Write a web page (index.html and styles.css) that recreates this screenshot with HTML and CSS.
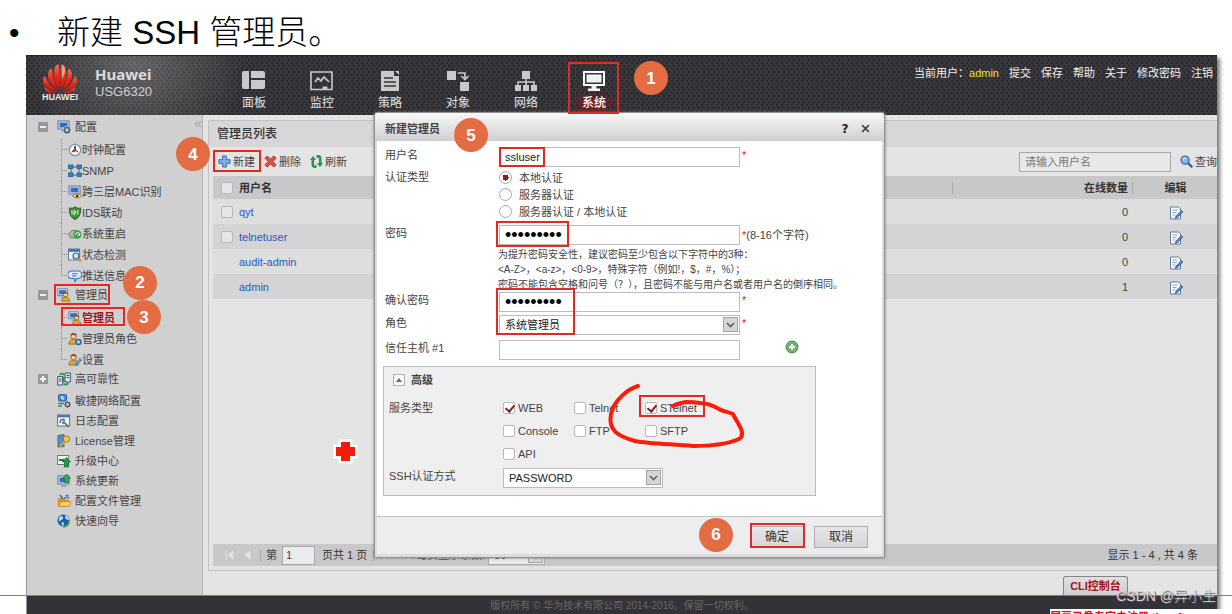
FILE: index.html
```html
<!DOCTYPE html>
<html lang="zh-CN">
<head>
<meta charset="utf-8">
<title>新建 SSH 管理员</title>
<link rel="stylesheet" href="styles.css">
</head>
<body>
<svg class="defs" aria-hidden="true">
  <defs>
    <linearGradient id="petal" x1="0" y1="0" x2="0" y2="1"><stop offset="0" stop-color="#f0705a"/><stop offset=".5" stop-color="#e8281c"/><stop offset="1" stop-color="#c81410"/></linearGradient>
    <symbol id="monitor" viewBox="0 0 14 14"><rect x="1" y="1" width="11" height="8" fill="#e8eef8" stroke="#5b6f92"/><rect x="2.500" y="2.500" width="8" height="5" fill="#2f6fc4"/><path d="M5 10h4l1 2H4z" fill="#9aa4b4"/></symbol>
    <symbol id="gear" viewBox="0 0 8 8"><circle cx="4" cy="4" r="2.400" fill="none" stroke="#4a5566" stroke-width="1.400"/><path d="M4 0v1.500M4 6.500V8M0 4h1.500M6.500 4H8M1.200 1.200l1 1M5.800 5.800l1 1M6.800 1.200l-1 1M1.200 6.800l1-1" stroke="#4a5566"/></symbol>
    <symbol id="person" viewBox="0 0 14 14"><path d="M1 13c0-4 2-5 5-5s5 1 5 5z" fill="#e9a928" stroke="#8a5a12" stroke-width=".8"/><circle cx="6" cy="4.500" r="3" fill="#f3cf9a" stroke="#7c4a1c" stroke-width=".8"/><path d="M2.800 4C3 .6 9 .6 9.200 4 7 3.500 5 2.500 2.800 4z" fill="#7c4a1c"/></symbol>
    <symbol id="i-config" viewBox="0 0 14 14"><use href="#monitor" width="14" height="14"/><circle cx="10" cy="10" r="4" fill="#d0d0d1"/><use href="#gear" x="6" y="6" width="8" height="8"/></symbol>
    <symbol id="i-clock" viewBox="0 0 14 14"><circle cx="7" cy="7" r="5.700" fill="#f4f8fb" stroke="#7b94a8" stroke-width="1.300"/><path d="M7 3v4.500l-3 1" fill="none" stroke="#a52020" stroke-width="1.800"/><path d="M7 7l3 2" stroke="#333"/></symbol>
    <symbol id="i-snmp" viewBox="0 0 14 14"><path d="M3 3h8M3 4v7M11 4v7M3 11h8" stroke="#51616e" fill="none"/><g fill="#2a86c8" stroke="#14517f" stroke-width=".7"><rect x=".5" y="1" width="4.500" height="3.500"/><rect x="9" y="1" width="4.500" height="3.500"/><rect x=".5" y="9" width="4.500" height="3.500"/><rect x="9" y="9" width="4.500" height="3.500"/></g></symbol>
    <symbol id="i-mac" viewBox="0 0 14 14"><use href="#monitor" width="14" height="14"/><path d="M5 11c2-3 6-3 8.500 0-2.500 2.600-6 2.600-8.500 0z" fill="#fbeec0" stroke="#8c6a1e" stroke-width=".9"/><circle cx="9.200" cy="10.900" r="1.500" fill="#463312"/></symbol>
    <symbol id="i-ids" viewBox="0 0 14 14"><path d="M1.500 2c2 .6 4 .3 5.500-1 1.500 1.300 3.500 1.600 5.500 1 .5 5-1 9-5.500 11.500C2.500 11 1 7 1.500 2z" fill="#3c9a34" stroke="#4d5a4d" stroke-width="1.200"/><path d="M4 4.500v4M6 4.500v4l1.500-1v-2zM10.500 4.500l-1.500 1 1.500 2-1.500 1" stroke="#e6f6da" fill="none"/></symbol>
    <symbol id="i-reboot" viewBox="0 0 14 14"><path d="M.6 7l3-3.500h6l2 3-1 4.500h-8z" fill="#aeb6b2" stroke="#6c7672" stroke-width=".9"/><circle cx="9.500" cy="7.500" r="4" fill="#3aa545"/><path d="M7.800 8a1.800 1.800 0 1 1 3.200 0M11.700 6v2.300h-2" fill="none" stroke="#fff"/></symbol>
    <symbol id="i-state" viewBox="0 0 14 14"><rect x=".6" y="1" width="11" height="11" fill="#f5f8fc" stroke="#4a78ac"/><path d="M1 2.500h10.500" stroke="#2f6cb4" stroke-width="2.500"/><circle cx="8" cy="8" r="3" fill="#cfe4f7" stroke="#3f5d80" stroke-width="1.100"/><path d="M10 10.300l3 3" stroke="#cf9420" stroke-width="2.200"/></symbol>
    <symbol id="i-push" viewBox="0 0 14 14"><path d="M3.500 2h6.500a3.300 3.300 0 0 1 0 7.500H8.500l-1.500 3-.8-3H3.500a3.300 3.300 0 0 1 0-7.500z" fill="#dcebfa" stroke="#3b74b2" stroke-width="1.200"/><path d="M4 4.800h5.500M4 7h4.500" stroke="#3b74b2"/></symbol>
    <symbol id="i-admin" viewBox="0 0 14 14"><use href="#monitor" width="12" height="12"/><use href="#person" x="4" y="3" width="11" height="11"/></symbol>
    <symbol id="i-role" viewBox="0 0 14 14"><use href="#person" width="13" height="13"/><circle cx="10.500" cy="10" r="2.500" fill="#b6d4f0" stroke="#38659c" stroke-width="1.500"/></symbol>
    <symbol id="i-set" viewBox="0 0 14 14"><use href="#person" width="13" height="13"/><path d="M13 6l-6 6" stroke="#3b74b2" stroke-width="3"/><path d="M12.500 6l-6 6" stroke="#a8caec"/></symbol>
    <symbol id="i-ha" viewBox="0 0 14 14"><path d="M.7 4.500h5v8.500h-5zM8 1h5.300v9H8z" fill="#dfe9e0" stroke="#38507a"/><path d="M2 7h2.500M2 9h2.500M9.500 3.500h2.500M9.500 5.500h2.500" stroke="#38507a"/><path d="M3 3c1-2 3-2 4 0M11 11c-1 2-3 2-4.500.5M6.800 5v5" stroke="#169634" stroke-width="1.700" fill="none"/></symbol>
    <symbol id="i-agile" viewBox="0 0 14 14"><rect x="1.500" y=".6" width="8" height="6.500" rx="1" fill="#3f8fdc" stroke="#2b5f9a"/><path d="M5.500 1.800L4 4h3L5.500 6.200" stroke="#fff" fill="none"/><path d="M1 9.500h6M5 12H1" stroke="#2b9a41" stroke-width="1.700"/><use href="#gear" x="7" y="7" width="7" height="7"/></symbol>
    <symbol id="i-log" viewBox="0 0 14 14"><rect x=".6" y="1" width="12" height="11" fill="#eef1f4" stroke="#59718c"/><path d="M1 2.200h11.500" stroke="#4b76a5" stroke-width="2.200"/><path d="M3 9c0-3 2-4 4-3.500v3.500H5M8 9l3.500 4" fill="none" stroke="#505f6f" stroke-width="1.400"/></symbol>
    <symbol id="i-license" viewBox="0 0 14 14"><path d="M1 1.500l6-.9v12L1 13z" fill="#568dc4" stroke="#39618a" stroke-width=".8"/><circle cx="9.500" cy="5" r="3.200" fill="#f4c652" stroke="#a36e16" stroke-width=".9"/><path d="M8 7l-5 5.500" stroke="#dd9d28" stroke-width="2.200"/></symbol>
    <symbol id="i-up" viewBox="0 0 14 14"><rect x=".6" y="1.500" width="11" height="9" fill="#f1f4f0" stroke="#6e7a72"/><path d="M2 6h5" stroke="#16803a" stroke-width="2"/><path d="M9.500 3.500L13.500 8H11.500v5h-4V8H5.500z" fill="#1f9b44" stroke="#0e6028" stroke-width=".7"/></symbol>
    <symbol id="i-update" viewBox="0 0 14 14"><use href="#monitor" y="1" width="14" height="14"/><path d="M9.500 0l4 4.500h-2v4h-4v-4h-2z" fill="#35aa56" stroke="#16703a" stroke-width=".7"/></symbol>
    <symbol id="i-file" viewBox="0 0 14 14"><path d="M.7 4h5l1.300 1.500h5V12H.7z" fill="#dd9422"/><path d="M2 12.500L3.500 7.500H14l-2 5z" fill="#fbcf61" stroke="#b87618" stroke-width=".7"/><path d="M3 1l3 4M9 1.200l3 3M11 1L7 5" stroke="#3c6fa8" stroke-width="1.600"/></symbol>
    <symbol id="i-wizard" viewBox="0 0 14 14"><circle cx="6.500" cy="6.500" r="6" fill="#1f5fb0"/><path d="M2 4c2-3 4-2 4 0S3 6 2 8zM8 1.500c2 0 4 2 4 4-2 1-4 0-4-4zM5 8c2 0 3 2 1 4-1-1-2-2-1-4z" fill="#b7e0f2"/><path d="M6 13c4 0 7-3 6-7" fill="none" stroke="#4aa838" stroke-width="1.600"/></symbol>
    <symbol id="i-edit" viewBox="0 0 14 14"><path d="M1.500 1h8l2 2v10h-10z" fill="#fbfcfe" stroke="#63799a"/><path d="M3.500 4h5M3.500 6.500h4M3.500 9h3" stroke="#86a0c4"/><path d="M12.500 4.500L7 10l-1 2.500 2.400-.8L14 6z" fill="#4b86c8" stroke="#2b5284" stroke-width=".6"/></symbol>
    <symbol id="i-chev" viewBox="0 0 15 15"><rect x=".5" y=".5" width="14" height="14" fill="#d5d5d8" stroke="#a3a3a8"/><path d="M4 6l3.500 3.500L11 6" fill="none" stroke="#5c5c62" stroke-width="1.600"/></symbol>
  </defs>
</svg>
<div class="slide">
  <h1 class="slide-title"><span class="bullet">•</span>新建 SSH 管理员。</h1>
  <div class="app">
    <header class="topbar">
      <div class="brand">
        <svg class="logo" viewBox="0 0 36 36" role="img" aria-label="HUAWEI">
          <g fill="url(#petal)">
            <path d="M17.400 25C12 17 11.500 12 12.500 3.500c.5-2.500 2.500-3.500 4.300-3.500.9 8 1.200 17 .6 25z"/>
            <path d="M18.600 25C24 17 24.500 12 23.500 3.500 23 1 21 0 19.200 0c-.9 8-1.200 17-.6 25z"/>
            <path d="M16.500 25.500C8 20 5.500 15 6 9.500 6.200 6.500 8 4.500 10 4c.3 8 3 15.500 6.500 21.500z"/>
            <path d="M19.500 25.500C28 20 30.500 15 30 9.500 29.800 6.500 28 4.500 26 4c-.3 8-3 15.500-6.500 21.500z"/>
            <path d="M15.500 26.500C6 25 1.500 21.500 1 17c-.2-2.500.6-4 1.800-5.500C5.500 18 10 23 15.500 26.500z"/>
            <path d="M20.500 26.500C30 25 34.500 21.500 35 17c.2-2.500-.6-4-1.800-5.500C30.500 18 26 23 20.500 26.500z"/>
            <path d="M15 27.500c-5 1.700-9 1.500-11-1C3 25.200 2.500 24 2.500 22.500 6.500 25.500 10.500 27 15 27.500z"/>
            <path d="M21 27.500c5 1.700 9 1.500 11-1 1-1.300 1.500-2.500 1.500-4C29.500 25.500 25.500 27 21 27.500z"/>
          </g>
          <path d="M20 1c2 .3 3 2 3 5-.4 4-2 7-3 9z" fill="#f8b48c" opacity=".8"/>
          <text class="logo-text" x="18" y="35" text-anchor="middle">HUAWEI</text>
        </svg>
        <div class="brand-text"><strong class="brand-name">Huawei</strong><span class="brand-model">USG6320</span></div>
      </div>
      <nav class="nav">
        <a class="nav-item" href="#"><svg class="nav-icon" viewBox="0 0 24 22"><path d="M0 3a2 2 0 0 1 2-2h5v18H2a2 2 0 0 1-2-2zM9 1h12a2 2 0 0 1 2 2v5H9zM9 10h14v7a2 2 0 0 1-2 2H9z"/></svg>面板</a>
        <a class="nav-item" href="#"><svg class="nav-icon" viewBox="0 0 24 22"><path d="M1 2h21v17.500H1z" fill="none" stroke="#c9c9cb" stroke-width="1.600"/><path d="M5 12l3-4 3 3 3-4 5 5" fill="none" stroke="#c9c9cb" stroke-width="1.700"/><path d="M12.500 16.500h5v3h-5z"/></svg>监控</a>
        <a class="nav-item" href="#"><svg class="nav-icon" viewBox="0 0 24 22"><path d="M3 1h13v5h5v15H3zM17 1h4v4z"/><path d="M6 8h9M6 12h12M6 16h12" stroke="#333235" stroke-width="1.600"/></svg>策略</a>
        <a class="nav-item" href="#"><svg class="nav-icon" viewBox="0 0 24 22"><path d="M1 1h9v9H1zM14 12h9v9h-9z"/><path d="M12 3h7v5M15.500 6l3.500 3.500L22.500 6" fill="none" stroke="#c9c9cb" stroke-width="1.700"/></svg>对象</a>
        <a class="nav-item" href="#"><svg class="nav-icon" viewBox="0 0 24 22"><path d="M8 1h8v8H8zM1 15h6v6H1zM9 15h6v6H9zM17 15h6v6h-6z"/><path d="M12 9v6M4 15v-3h16v3" fill="none" stroke="#c9c9cb" stroke-width="1.500"/></svg>网络</a>
        <a class="nav-item active" href="#"><svg class="nav-icon" viewBox="0 0 24 22"><path d="M2 2h20v13H2z" fill="none" stroke="#fff" stroke-width="2"/><path d="M4.500 4.500h15v8h-15zM9.500 16h5v2.500H18V21H6v-2.500h3.500z" fill="#f2f2f2"/></svg>系统</a>
      </nav>
      <div class="account">
        <span>当前用户：<b class="account-name">admin</b></span>
        <a href="#">提交</a><a href="#">保存</a><a href="#">帮助</a><a href="#">关于</a><a href="#">修改密码</a><a href="#">注销</a>
      </div>
    </header>

    <div class="workspace">
      <aside class="sidebar">
        <span class="collapse">«</span>
        <ul class="tree">
          <li>
            <a class="node head" href="#"><i class="toggle minus"></i><svg class="icon"><use href="#i-config"/></svg>配置</a>
            <ul class="branch">
              <li><a class="node" href="#"><svg class="icon"><use href="#i-clock"/></svg>时钟配置</a></li>
              <li><a class="node" href="#"><svg class="icon"><use href="#i-snmp"/></svg>SNMP</a></li>
              <li><a class="node" href="#"><svg class="icon"><use href="#i-mac"/></svg>跨三层MAC识别</a></li>
              <li><a class="node" href="#"><svg class="icon"><use href="#i-ids"/></svg>IDS联动</a></li>
              <li><a class="node" href="#"><svg class="icon"><use href="#i-reboot"/></svg>系统重启</a></li>
              <li><a class="node" href="#"><svg class="icon"><use href="#i-state"/></svg>状态检测</a></li>
              <li><a class="node" href="#"><svg class="icon"><use href="#i-push"/></svg>推送信息</a></li>
            </ul>
          </li>
          <li>
            <a class="node head" href="#"><i class="toggle minus"></i><svg class="icon"><use href="#i-admin"/></svg>管理员</a>
            <ul class="branch">
              <li><a class="node current" href="#"><svg class="icon"><use href="#i-admin"/></svg>管理员</a></li>
              <li><a class="node" href="#"><svg class="icon"><use href="#i-role"/></svg>管理员角色</a></li>
              <li><a class="node" href="#"><svg class="icon"><use href="#i-set"/></svg>设置</a></li>
            </ul>
          </li>
          <li><a class="node head" href="#"><i class="toggle plus"></i><svg class="icon"><use href="#i-ha"/></svg>高可靠性</a></li>
        </ul>
        <ul class="tree leaves">
          <li><a class="node" href="#"><svg class="icon"><use href="#i-agile"/></svg>敏捷网络配置</a></li>
          <li><a class="node" href="#"><svg class="icon"><use href="#i-log"/></svg>日志配置</a></li>
          <li><a class="node" href="#"><svg class="icon"><use href="#i-license"/></svg>License管理</a></li>
          <li><a class="node" href="#"><svg class="icon"><use href="#i-up"/></svg>升级中心</a></li>
          <li><a class="node" href="#"><svg class="icon"><use href="#i-update"/></svg>系统更新</a></li>
          <li><a class="node" href="#"><svg class="icon"><use href="#i-file"/></svg>配置文件管理</a></li>
          <li><a class="node" href="#"><svg class="icon"><use href="#i-wizard"/></svg>快速向导</a></li>
        </ul>
      </aside>

      <main class="main">
        <section class="panel">
          <h2 class="panel-title">管理员列表</h2>
          <div class="panel-body">
            <div class="toolbar">
              <button class="tool" type="button"><svg class="tool-icon" viewBox="0 0 14 14"><path d="M5 1h4v4h4v4H9v4H5V9H1V5h4z" fill="#7fb0e6" stroke="#3566a4"/></svg>新建</button>
              <button class="tool" type="button"><svg class="tool-icon" viewBox="0 0 14 14"><path d="M1 3.500L3.500 1 7 4.500 10.500 1 13 3.500 9.500 7l3.500 3.500-2.500 2.500L7 9.500 3.500 13 1 10.500 4.500 7z" fill="#dd5048" stroke="#ac2924"/></svg>删除</button>
              <button class="tool" type="button"><svg class="tool-icon" viewBox="0 0 14 14"><path d="M7 12.500H4.500C3 12.500 3 11 3 9V5M7 1.500h2.500C11 1.500 11 3 11 5v4" fill="none" stroke="#2f9350" stroke-width="2.800"/><path d="M0 5.500L3.300 1 6.500 5.500zM7.500 8.500l3.200 4.500L14 8.500z" fill="#2f9350"/></svg>刷新</button>
              <div class="search">
                <input class="search-input" type="text" placeholder="请输入用户名" aria-label="请输入用户名">
                <button class="tool" type="button"><svg class="tool-icon" viewBox="0 0 14 14"><path d="M8.500 8.500l4 4" stroke="#46658c" stroke-width="2.600" stroke-linecap="round"/><circle cx="5.500" cy="5.500" r="4.300" fill="#86b6ea" stroke="#3f6cae" stroke-width="1.400"/><path d="M3 5c.5-1.500 2-2 3.500-1.500" stroke="#e6f2fd" fill="none"/></svg>查询</button>
              </div>
            </div>
            <table class="grid">
              <thead>
                <tr><th class="col-check"><input class="check" type="checkbox" aria-label="全选"></th><th class="col-name">用户名</th><th class="col-online">在线数量</th><th class="col-edit">编辑</th></tr>
              </thead>
              <tbody>
                <tr><td class="col-check"><input class="check" type="checkbox" aria-label="qyt"></td><td><a href="#">qyt</a></td><td class="col-online">0</td><td class="col-edit"><button class="edit" type="button" aria-label="编辑 qyt"><svg class="icon"><use href="#i-edit"/></svg></button></td></tr>
                <tr><td class="col-check"><input class="check" type="checkbox" aria-label="telnetuser"></td><td><a href="#">telnetuser</a></td><td class="col-online">0</td><td class="col-edit"><button class="edit" type="button" aria-label="编辑 telnetuser"><svg class="icon"><use href="#i-edit"/></svg></button></td></tr>
                <tr><td></td><td><a href="#">audit-admin</a></td><td class="col-online">0</td><td class="col-edit"><button class="edit" type="button" aria-label="编辑 audit-admin"><svg class="icon"><use href="#i-edit"/></svg></button></td></tr>
                <tr><td></td><td><a href="#">admin</a></td><td class="col-online">1</td><td class="col-edit"><button class="edit" type="button" aria-label="编辑 admin"><svg class="icon"><use href="#i-edit"/></svg></button></td></tr>
              </tbody>
            </table>
            <div class="pager">
              <svg class="pager-arrows" viewBox="0 0 28 10"><path d="M2 0v10M9 1L4 5l5 4zM26 1l-5 4 5 4z" fill="#e2e2e3" stroke="#e2e2e3"/></svg>
              <span class="divider"></span>
              <label class="pager-label" for="page">第</label>
              <input class="page-input" id="page" type="text" value="1">
              <span class="pager-total">页共 1 页</span>
              <span class="divider"></span>
              <svg class="pager-arrows" viewBox="0 0 28 10"><path d="M2 1l5 4-5 4zM18 1l5 4-5 4zM26 0v10" fill="#e2e2e3" stroke="#e2e2e3"/></svg>
              <label class="pager-size" for="size">每页显示条数:</label>
              <span class="select"><select class="size-select" id="size"><option>50</option></select><svg class="select-arrow"><use href="#i-chev"/></svg></span>
              <span class="pager-info">显示 1 - 4 , 共 4 条</span>
            </div>
          </div>
        </section>
        <div class="console-bar"><button class="console" type="button">CLI控制台</button></div>
      </main>
    </div>

    <footer class="footer">版权所有 © 华为技术有限公司 2014-2016。保留一切权利。</footer>

    <form class="dialog" role="dialog" aria-labelledby="dialog-title">
      <div class="dialog-head">
        <h2 class="dialog-title" id="dialog-title">新建管理员</h2>
        <button class="dialog-tool" type="button" aria-label="帮助">?</button>
        <button class="dialog-tool" type="button" aria-label="关闭"><svg class="close-icon" viewBox="0 0 8 8"><path d="M1 1l6 6M7 1L1 7" stroke="#444" stroke-width="1.400"/></svg></button>
      </div>
      <div class="dialog-body">
        <div class="row"><label class="label" for="user">用户名</label><input class="field" id="user" type="text" value="ssluser"><span class="req">*</span></div>
        <div class="row auth">
          <span class="label" id="auth-label">认证类型</span>
          <div class="radios" role="radiogroup" aria-labelledby="auth-label">
            <label class="radio-label"><input class="radio" type="radio" name="auth" checked>本地认证</label>
            <label class="radio-label"><input class="radio" type="radio" name="auth">服务器认证</label>
            <label class="radio-label"><input class="radio" type="radio" name="auth">服务器认证 / 本地认证</label>
          </div>
        </div>
        <div class="row password"><label class="label" for="pwd">密码</label><input class="field secret" id="pwd" type="password" value="abcdefghi"><span class="hint"><span class="req">*</span>(8-16个字符)</span></div>
        <p class="tips">为提升密码安全性，建议密码至少包含以下字符中的3种：<br>&lt;A-Z&gt;，&lt;a-z&gt;，&lt;0-9&gt;，特殊字符（例如!，$，#，%）；<br>密码不能包含空格和问号（？），且密码不能与用户名或者用户名的倒序相同。</p>
        <div class="row"><label class="label" for="pwd2">确认密码</label><input class="field secret" id="pwd2" type="password" value="abcdefghi"><span class="req">*</span></div>
        <div class="row role"><label class="label" for="role">角色</label><span class="select"><select class="field" id="role"><option>系统管理员</option></select><svg class="select-arrow"><use href="#i-chev"/></svg></span><span class="req">*</span></div>
        <div class="row host"><label class="label" for="host">信任主机 #1</label><input class="field" id="host" type="text"><button class="add" type="button" aria-label="添加"><svg class="add-icon" viewBox="0 0 14 14"><circle cx="7" cy="7" r="6" fill="#6fb468" stroke="#4c8d4a"/><path d="M7 4v6M4 7h6" stroke="#fff" stroke-width="2"/></svg></button></div>
        <section class="advanced">
          <h3 class="advanced-title"><button class="fold" type="button" aria-label="收起高级"></button>高级</h3>
          <div class="row service-row">
            <span class="label">服务类型</span>
            <div class="services">
              <label class="check-label"><input class="check" type="checkbox" checked>WEB</label>
              <label class="check-label"><input class="check" type="checkbox">Telnet</label>
              <label class="check-label"><input class="check" type="checkbox" checked>STelnet</label>
              <label class="check-label"><input class="check" type="checkbox">Console</label>
              <label class="check-label"><input class="check" type="checkbox">FTP</label>
              <label class="check-label"><input class="check" type="checkbox">SFTP</label>
              <label class="check-label"><input class="check" type="checkbox">API</label>
            </div>
          </div>
          <div class="row"><label class="label" for="ssh">SSH认证方式</label><span class="select"><select class="field short" id="ssh"><option>PASSWORD</option></select><svg class="select-arrow"><use href="#i-chev"/></svg></span></div>
        </section>
      </div>
      <div class="dialog-foot"><button class="btn" type="button">确定</button><button class="btn" type="button">取消</button></div>
    </form>
  </div>

  <div class="rule"></div>
  <svg class="notes" aria-hidden="true">
    <g class="frames">
      <rect x="569" y="63" width="49" height="50"/>
      <rect x="214" y="151" width="46" height="20"/>
      <rect x="55" y="285" width="54" height="19"/>
      <rect x="62" y="308" width="62" height="17"/>
      <rect x="500" y="148" width="44" height="18"/>
      <rect x="497" y="222" width="71" height="24"/>
      <rect x="497" y="289" width="77" height="45"/>
      <rect x="640" y="396" width="64" height="20"/>
      <rect x="751" y="524" width="53" height="23"/>
    </g>
    <path class="scribble" d="M638 386C628 389 614 400 611 414C608 430 617 436 635 441C650 444 672 444 693 446C712 446 730 443 739 439C744 436 742 430 739 425C737 421 734 417 733 414C728 412 722 411 719 409C712 405 707 403 700 403C694 402 690 402 686 402C681 403 676 404 673 406"/>
    <path d="M341 442h9v5h5v9h-5v5h-9v-5h-5v-9h5z" fill="#fa1808" stroke="#fff" stroke-width="5" paint-order="stroke"/>
    <g class="badges">
      <circle cx="651" cy="78" r="17"/><circle cx="140" cy="283" r="17"/><circle cx="144" cy="317" r="17"/><circle cx="193" cy="154" r="17"/><circle cx="471" cy="135" r="17"/><circle cx="716" cy="535" r="17"/>
    </g>
    <g class="numbers">
      <text x="651" y="84">1</text><text x="140" y="288">2</text><text x="144" y="323">3</text><text x="193" y="160">4</text><text x="471" y="141">5</text><text x="716" y="540">6</text>
    </g>
  </svg>
  <div class="recorder">屏幕录像专家未注册 tlxsoft</div>
  <div class="watermark">CSDN @异小生</div>
</div>
</body>
</html>
```
FILE: styles.css
```css
* { box-sizing: border-box; }
body {
  margin: 0;
  background: #fff;
  color: #444;
  font: 11px/16px "Liberation Sans", "Noto Sans CJK SC", sans-serif;
}
h1, h2, h3, p, ul { margin: 0; padding: 0; font-weight: normal; }
ul { list-style: none; }
a { color: inherit; text-decoration: none; }
button, input, select { font: inherit; color: inherit; margin: 0; }
button { border: 0; padding: 0; background: none; }
.defs { position: absolute; width: 0; height: 0; }

.slide {
  position: relative;
  display: flex;
  flex-direction: column;
  height: 100vh;
  min-height: 614px;
  overflow: hidden;
}
.slide-title {
  display: flex;
  padding: 10px 0 0 9px;
  height: 55px;
  color: #000;
  font-size: 33px;
  font-weight: 300;
  line-height: 46px;
  white-space: pre;
}
.bullet { width: 48px; font-size: 30px; }

.app {
  position: relative;
  flex: 1;
  display: flex;
  flex-direction: column;
  margin: 0 15px 0 26px;
  box-shadow: 3px 3px 4px #777;
  background: #e4e4e5;
}

.topbar {
  display: flex;
  height: 60px;
  border-top: 1px solid #252427;
  background:
    radial-gradient(ellipse 110px 90px at 110px 10px, rgba(255, 255, 255, .24), transparent),
    radial-gradient(circle at 1px 1px, #28272a 1px, transparent 1px) 0 0 / 5px 6px,
    radial-gradient(circle at 1px 1px, #28272a 1px, transparent 1px) 2px 3px / 5px 6px,
    #38373b;
  color: #e2e2e2;
}
.brand { display: flex; gap: 17px; width: 194px; padding: 8px 0 0 16px; }
.logo { width: 36px; height: 37px; overflow: visible; }
.logo-text { fill: #e8e8e8; font-size: 9px; font-weight: bold; }
.brand-text { display: flex; flex-direction: column; padding-top: 1px; }
.brand-name { font: bold 15px/18px "Noto Sans", sans-serif; color: #dcdcdc; }
.brand-model { font-size: 13px; line-height: 18px; color: #cfcfcf; }
.nav { display: flex; }
.nav-item {
  display: flex;
  flex-direction: column;
  align-items: center;
  width: 68px;
  padding-top: 14px;
  font-size: 12px;
  line-height: 22px;
}
.nav-icon { width: 24px; height: 22px; fill: #c9c9cb; }
.active {
  color: #fff;
  font-weight: 500;
  background: radial-gradient(ellipse 24px 14px at 50% 48px, rgba(200, 0, 0, .6), transparent);
}
.account { display: flex; gap: 10px; margin-left: auto; padding: 9px 4px 0 0; color: #f2f2f2; }
.account-name { color: #e8e02a; font-weight: normal; }

.workspace { flex: 1; display: flex; min-height: 0; }
.sidebar {
  position: relative;
  flex: none;
  width: 177px;
  padding-top: 3px;
  border-left: 1px solid #98989a;
  border-right: 1px solid #b4b4b6;
  background: #d0d0d1;
}
.collapse { position: absolute; top: 0; right: 0; color: #a4a4a8; font-size: 14px; }
.node { display: flex; align-items: center; height: 21px; white-space: nowrap; }
.icon { width: 14px; height: 14px; flex: none; }
.head { height: 18px; padding-left: 11px; }
.head .icon { margin: 0 4px 0 9px; }
.toggle { position: relative; width: 10px; height: 10px; background: #98989b; }
.toggle::before { content: ""; position: absolute; inset: 4px 2px; background: #f2f2f2; }
.plus::after { content: ""; position: absolute; inset: 2px 4px; background: #f2f2f2; }
.branch { padding: 3px 0 0 34px; }
.branch li { position: relative; padding-left: 7px; }
.branch li::before { content: ""; position: absolute; left: 0; top: 0; bottom: 0; border-left: 1px dotted #8c8c8f; }
.branch li::after { content: ""; position: absolute; left: 0; top: 10px; width: 6px; border-top: 1px dotted #8c8c8f; }
.branch li:last-child::before { bottom: 10px; }
.current { color: #a01418; font-weight: bold; }
.leaves { padding: 3px 0 0 30px; }
.leaves .node { height: 20px; gap: 4px; }

.main { flex: 1; min-width: 0; display: flex; flex-direction: column; padding: 5px 0 0 5px; }
.panel {
  flex: 1;
  display: flex;
  flex-direction: column;
  border: solid #c2c2c4;
  border-width: 1px 0 1px 1px;
}
.panel-title { padding: 5px 8px 4px; background: #d7d7d9; font-size: 12px; line-height: 17px; font-weight: 500; color: #333; }
.panel-body { flex: 1; display: flex; flex-direction: column; padding: 0 0 4px 4px; }
.toolbar { display: flex; align-items: center; gap: 9px; height: 29px; padding-left: 5px; }
.tool { display: flex; align-items: center; gap: 2px; white-space: nowrap; }
.tool-icon { width: 13px; height: 13px; }
.search { display: flex; align-items: center; gap: 9px; margin-left: auto; }
.search-input { width: 152px; height: 20px; padding: 0 5px; border: 1px solid #a9a9ab; background: #e8e8e9; }
.search-input::placeholder { color: #777; }
.grid { width: 100%; border-collapse: collapse; table-layout: fixed; }
.grid th { height: 23px; padding: 0; background: #c8c8ca; text-align: left; font-weight: bold; color: #333; }
.grid td { height: 25px; padding: 0; background: #dededf; }
.grid tr:nth-child(even) td { background: #d4d4d6; }
.grid a { color: #1d5cc4; }
.grid .col-check { width: 26px; padding-left: 8px; }
.grid .col-check .check { display: block; }
.grid .col-online { width: 180px; padding-right: 4px; text-align: right; }
.grid .col-edit { width: 85px; padding-left: 2px; text-align: center; }
.grid th.col-online, .grid th.col-edit { background: linear-gradient(#a9a9ac, #a9a9ac) 0 50% / 1px 12px no-repeat #c8c8ca; }
.edit { display: inline-flex; vertical-align: middle; }
.pager { display: flex; align-items: center; height: 22px; margin-top: auto; padding-left: 11px; background: #c8c8ca; white-space: nowrap; }
.pager-arrows { width: 28px; height: 10px; margin-right: 8px; }
.divider { width: 1px; height: 12px; background: #aaaaac; }
.pager-label { padding: 0 5px; }
.page-input { width: 33px; height: 19px; padding: 0 3px; border: 1px solid #aaa; background: #ebebec; }
.pager-total { padding: 0 6px 0 7px; color: #333; }
.pager-total + .divider + .pager-arrows { margin: 0 3px 0 8px; }
.pager-size { padding: 0 3px; }
.size-select { width: 57px; height: 19px; padding: 0 5px; border: 1px solid #aaa; background: #ebebec; appearance: none; }
.pager-info { margin-left: auto; padding-right: 19px; color: #333; }
.console-bar { display: flex; justify-content: flex-end; align-items: flex-end; height: 24px; padding-right: 89px; }
.console {
  width: 65px;
  height: 19px;
  border: 1px solid #858588;
  border-bottom: 0;
  border-radius: 3px 3px 0 0;
  background: linear-gradient(#e0e0e1, #cfcfd1);
  color: #a01418;
  font-weight: bold;
}
.footer { height: 19px; padding-top: 3px; border-left: 1px solid #98989a; background: #333237; color: #68676b; font-size: 10px; text-align: center; }

.dialog {
  position: absolute;
  left: 348px;
  top: 57px;
  width: 511px;
  padding: 0 2px 3px;
  border: 1px solid #8f8f92;
  border-radius: 3px 3px 1px 1px;
  background: #dcdcde;
  box-shadow: 0 0 3px #777;
}
.dialog-head {
  display: flex;
  align-items: center;
  height: 28px;
  margin: 0 -2px;
  padding: 3px 12px 0 10px;
  border-radius: 3px 3px 0 0;
  background: linear-gradient(#f8f8f8, #cfcfd1);
}
.dialog-title { flex: 1; font-size: 11px; line-height: 16px; font-weight: bold; }
.dialog-tool { width: 14px; margin-left: 6px; font: bold 12px/14px "DejaVu Sans", sans-serif; color: #222; }
.close-icon { width: 9px; height: 9px; }
.dialog-body { padding: 6px 66px 20px 6px; background: #fff; }
.row { display: flex; align-items: flex-start; padding-left: 2px; }
.label { flex: none; width: 114px; }
.field {
  display: block;
  width: 241px;
  height: 20px;
  padding: 0 5px;
  border: 1px solid #bcbcbf;
  border-radius: 0;
  background: #fff;
  color: #222;
  appearance: none;
}
.short { width: 160px; }
.secret { font-size: 18px; color: #000; }
.req { margin-left: 2px; color: #c8282c; }
.hint { line-height: 20px; white-space: nowrap; }
.auth { padding-top: 2px; }
.radio-label { display: flex; align-items: center; gap: 7px; height: 17px; }
.radio { width: 13px; height: 13px; border: 1px solid #aaa; border-radius: 50%; background: #fff; appearance: none; }
.radio:checked { background: radial-gradient(circle, #a01014 3px, #fff 3px); }
.password { padding-top: 5px; }
.tips { padding: 2px 0 0 115px; font-size: 10px; line-height: 15px; white-space: nowrap; }
.role { padding-top: 3px; }
.host { padding-top: 5px; }
.select { position: relative; display: block; }
.select-arrow { position: absolute; right: 2px; top: 2px; width: 15px; height: 15px; pointer-events: none; }
.add { margin-left: 45px; }
.add-icon { display: block; width: 14px; height: 14px; }
.advanced { width: 433px; margin-top: 6px; padding: 5px 4px 7px; border: 1px solid #bcbcc0; background: #efeff0; }
.advanced .row { padding-left: 1px; }
.advanced-title { display: flex; align-items: center; gap: 6px; padding-left: 5px; margin-bottom: 8px; font-size: 11px; line-height: 16px; font-weight: bold; }
.fold { width: 12px; height: 12px; border: 1px solid #b4b4b8; background: #fafafa; }
.fold::before { content: ""; display: block; width: 0; margin: auto; border: 3px solid transparent; border-top: 0; border-bottom: 4px solid #666; }
.services { display: grid; grid-template-columns: 71px 71px 71px; margin-bottom: 3px; }
.check-label { display: flex; align-items: center; gap: 3px; height: 23px; }
.service-row .label { padding-top: 4px; }
.check { width: 12px; height: 12px; border: 1px solid #b8b8bb; border-radius: 2px; background: #fff; appearance: none; }
.grid .check { background: #e6e6e7; }
.check:checked::before { content: ""; display: block; width: 4px; height: 7px; margin: 0 0 0 3px; border: solid #8c1c1c; border-width: 0 2px 2px 0; transform: rotate(40deg); }
.dialog-foot { display: flex; justify-content: flex-end; gap: 10px; padding: 9px 14px 6px; border-top: 1px solid #c2c2c5; background: #ededef; }
.btn { width: 54px; height: 22px; border: 1px solid #aeaeb2; background: linear-gradient(#e6e6e8, #d6d6d9); font-size: 12px; color: #333; }

.rule { position: absolute; left: 0; right: 0; bottom: 18px; height: 1px; background: #e4564a; }
.notes { position: absolute; inset: 0; width: 100%; height: 100%; pointer-events: none; }
.frames { fill: none; stroke: #e02a24; stroke-width: 2; }
.scribble { fill: none; stroke: #fb1c0c; stroke-width: 4; stroke-linecap: round; stroke-linejoin: round; }
.badges { fill: #e36c42; }
.numbers { fill: #fff; font-size: 17px; font-weight: bold; text-anchor: middle; }
.recorder {
  position: absolute;
  left: 1050px;
  right: 0;
  bottom: -11px;
  height: 16px;
  background: #fff;
  color: #e01010;
  font-weight: bold;
  white-space: nowrap;
}
.watermark { position: absolute; right: 16px; bottom: 10px; font-size: 14px; font-weight: 300; color: #d4d4d6; text-shadow: 1px 1px 1px #55555a; white-space: nowrap; }
```
